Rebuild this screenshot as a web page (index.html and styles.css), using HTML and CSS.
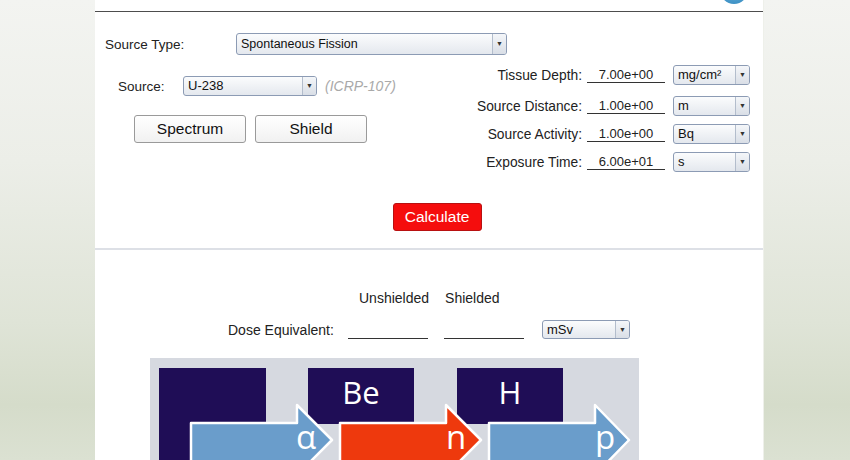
FILE: index.html
```html
<!DOCTYPE html>
<html lang="en">
<head>
    <meta charset="UTF-8" />
    <title>Neutron Dose Calculator</title>
    <link rel="stylesheet" href="styles.css">
</head>
<body>
    <div class="panel">
        <div class="topbar">
            <div class="logo-dot"></div>
        </div>

        <div class="form">
            <div class="type-row">
                <span class="label type-label">Source Type:</span>
                <div class="select select-type">
                    <span class="select-text small">Spontaneous Fission</span>
                    <span class="select-btn">&#9660;</span>
                </div>
            </div>

            <div class="cols">
                <div class="left-col">
                    <div class="source-row">
                        <span class="label source-label">Source:</span>
                        <div class="select select-source">
                            <span class="select-text">U-238</span>
                            <span class="select-btn">&#9660;</span>
                        </div>
                        <span class="ref">(ICRP-107)</span>
                    </div>
                    <div class="btn-row">
                        <button class="btn">Spectrum</button>
                        <button class="btn">Shield</button>
                    </div>
                </div>

                <div class="right-col">
                    <div class="param-row first">
                        <span class="label">Tissue Depth:</span>
                        <span class="field">7.00e+00</span>
                        <div class="select select-unit">
                            <span class="select-text">mg/cm&sup2;</span>
                            <span class="select-btn">&#9660;</span>
                        </div>
                    </div>
                    <div class="param-row">
                        <span class="label">Source Distance:</span>
                        <span class="field">1.00e+00</span>
                        <div class="select select-unit">
                            <span class="select-text">m</span>
                            <span class="select-btn">&#9660;</span>
                        </div>
                    </div>
                    <div class="param-row">
                        <span class="label">Source Activity:</span>
                        <span class="field">1.00e+00</span>
                        <div class="select select-unit">
                            <span class="select-text">Bq</span>
                            <span class="select-btn">&#9660;</span>
                        </div>
                    </div>
                    <div class="param-row">
                        <span class="label">Exposure Time:</span>
                        <span class="field">6.00e+01</span>
                        <div class="select select-unit">
                            <span class="select-text">s</span>
                            <span class="select-btn">&#9660;</span>
                        </div>
                    </div>
                </div>
            </div>

            <div class="calc-row">
                <button class="btn-calc">Calculate</button>
            </div>
        </div>

        <div class="results">
            <div class="res-head">
                <span class="head-unsh">Unshielded</span>
                <span class="head-sh">Shielded</span>
            </div>
            <div class="dose-row">
                <span class="label dose-label">Dose Equivalent:</span>
                <span class="field dose-field"></span>
                <span class="field dose-field"></span>
                <div class="select select-dose">
                    <span class="select-text">mSv</span>
                    <span class="select-btn">&#9660;</span>
                </div>
            </div>

            <div class="diagram">
                <svg width="489" height="104" viewBox="0 0 489 104">
                    <rect x="0" y="0" width="489" height="104" fill="#d6d9e0"/>
                    <rect x="9" y="10" width="107" height="94" fill="#1f0d56"/>
                    <rect x="158" y="10" width="106" height="56" fill="#1f0d56"/>
                    <rect x="307" y="10" width="106" height="56" fill="#1f0d56"/>
                    <text class="el" x="211" y="46" text-anchor="middle">Be</text>
                    <text class="el" x="360" y="46" text-anchor="middle">H</text>

                    <path d="M41 65 H147 V47 L182 82 L147 117 V108 H41 Z" fill="#6a9dcb" stroke="#fff" stroke-width="2.5" stroke-linejoin="round"/>
                    <path d="M190 65 H296 V47 L331 82 L296 117 V108 H190 Z" fill="#ee390d" stroke="#fff" stroke-width="2.5" stroke-linejoin="round"/>
                    <path d="M339 65 H445 V47 L479 82 L445 117 V108 H339 Z" fill="#6a9dcb" stroke="#fff" stroke-width="2.5" stroke-linejoin="round"/>

                    <text class="particle" x="156" y="91" text-anchor="middle">&alpha;</text>
                    <text class="particle" x="306" y="91" text-anchor="middle">n</text>
                    <text class="particle" x="455" y="91" text-anchor="middle">p</text>
                </svg>
            </div>
        </div>
    </div>
</body>
</html>
```

FILE: styles.css
```css
* {
    margin: 0;
    padding: 0;
    box-sizing: border-box;
}

body {
    font-family: 'Liberation Sans', Arial, sans-serif;
    color: #222;
    height: 460px;
    overflow: hidden;
    background: linear-gradient(to bottom, #f3f4f1 0%, #eceee8 35%, #dfe4d7 70%, #d5dcca 88%, #dbe1d2 100%);
}

.panel {
    width: 668px;
    height: 460px;
    margin-left: 95px;
    background-color: #fff;
    box-shadow: 1px 0 0 #eef0ea;
    overflow: hidden;
}

.topbar {
    position: relative;
    height: 12px;
    border-bottom: 1px solid #4d4d4d;
}

.logo-dot {
    position: absolute;
    left: 625px;
    top: -24px;
    width: 28px;
    height: 28px;
    border-radius: 50%;
    background: radial-gradient(circle at 50% 30%, #7fc2e6, #2e86bd);
}

.form {
    padding: 21px 13px 0 10px;
    height: 236px;
}

.label {
    font-size: 13.5px;
}

.type-row {
    display: flex;
    align-items: center;
}

.type-label {
    width: 131px;
}

/* dropdowns */
.select {
    display: flex;
    align-items: stretch;
    height: 20px;
    border: 1px solid #8c9bb4;
    border-radius: 3px;
    background: linear-gradient(to bottom, #fbfcfd, #e4e8ee);
    overflow: hidden;
}

.select-text {
    flex: 1;
    font-size: 13px;
    line-height: 18px;
    padding-left: 4px;
    color: #111;
    white-space: nowrap;
}

.select-text.small {
    font-size: 12.5px;
}

.select-btn {
    width: 14px;
    border-left: 1px solid #b3bdcc;
    font-size: 7px;
    line-height: 18px;
    text-align: center;
    color: #333;
    background: linear-gradient(to bottom, #f4f6f9, #d9dee6);
}

.select-type {
    width: 271px;
    height: 22px;
}

.select-type .select-text,
.select-type .select-btn {
    line-height: 20px;
}

.select-source {
    width: 134px;
}

.select-unit {
    width: 77px;
    margin-left: 8px;
}

.select-dose {
    width: 88px;
    height: 19px;
    margin-left: 18px;
}

.select-dose .select-text,
.select-dose .select-btn {
    line-height: 17px;
}

.cols {
    display: flex;
    justify-content: space-between;
    margin-top: 10px;
}

.left-col {
    padding-top: 11px;
}

.source-row {
    display: flex;
    align-items: center;
    padding-left: 13px;
}

.source-label {
    width: 65px;
}

.ref {
    margin-left: 8px;
    font-size: 14px;
    font-style: italic;
    color: #a9a9a9;
}

.btn-row {
    display: flex;
    gap: 9px;
    margin-top: 19px;
    padding-left: 29px;
}

.btn {
    width: 112px;
    height: 28px;
    font-family: inherit;
    font-size: 15.5px;
    color: #111;
    background: linear-gradient(to bottom, #ffffff, #f1f1f1);
    border: 1px solid #9a9a9a;
    border-radius: 3px;
}

.right-col {
    display: flex;
    flex-direction: column;
    gap: 8px;
}

.param-row {
    display: flex;
    align-items: center;
    justify-content: flex-end;
    height: 20px;
}

.param-row.first {
    margin-bottom: 3px;
}

.param-row .label {
    font-size: 13.8px;
}

.field {
    width: 78px;
    margin-left: 5px;
    font-size: 13px;
    text-align: center;
    line-height: 15px;
    border-bottom: 1px solid #333;
}

.calc-row {
    display: flex;
    justify-content: center;
    padding-left: 19px;
    margin-top: 31px;
}

.btn-calc {
    width: 89px;
    height: 28px;
    font-family: inherit;
    font-size: 15.5px;
    color: #fff;
    background-color: #f50d0d;
    border: 1px solid #b81111;
    border-radius: 3px;
}

.results {
    border-top: 2px solid #dde0e6;
}

.res-head {
    display: flex;
    padding: 40px 0 0 264px;
    font-size: 14px;
}

.head-sh {
    margin-left: 16px;
}

.dose-row {
    display: flex;
    align-items: flex-end;
    margin-top: 14px;
    padding-left: 133px;
}

.dose-label {
    width: 120px;
    font-size: 14px;
    line-height: 17px;
}

.dose-field {
    width: 80px;
    height: 17px;
    margin-left: 0;
    margin-right: 16px;
}

.dose-field + .dose-field {
    margin-right: 0;
}

.diagram {
    margin: 19px 0 0 55px;
    height: 104px;
}

.diagram svg {
    display: block;
}

.el {
    font-family: 'Open Sans', sans-serif;
    font-size: 31px;
    fill: #fff;
}

.particle {
    font-family: 'Open Sans', sans-serif;
    font-size: 33px;
    fill: #fff;
}
```
